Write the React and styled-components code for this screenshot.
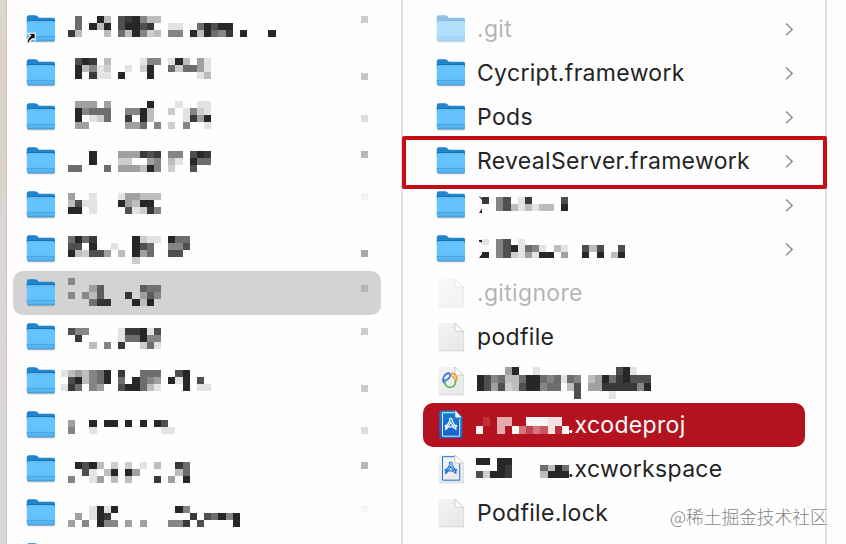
import React from "react";
import styled, { createGlobalStyle } from "styled-components";

const GlobalStyle = createGlobalStyle`
  * { box-sizing: border-box; }
  body {
    margin: 0;
    overflow: hidden;
    background: #fefefe;
    font-family: Inter, "Liberation Sans", sans-serif;
    color: #242424;
  }
`;

const Finder = styled.main`
  position: relative;
  display: flex;
  width: 846px;
  height: 544px;
  overflow: hidden;
`;

const WindowEdge = styled.div`
  flex: none;
  width: 7px;
  border-right: 1px solid #c9c3c1;
  background: linear-gradient(#dcd8c6, #d8d3c8 22%, #dcd6d5 45%, #ddd8d8);
`;

const Column = styled.section`
  flex: none;
  width: ${(p) => p.$width}px;
  padding: 7px ${(p) => p.$right}px 0 ${(p) => p.$left}px;
  border-right: 2px solid #dedede;
`;

const Row = styled.div`
  display: flex;
  height: 44px;
  padding-left: 13px;
  border-radius: 10px;
  background: ${(p) => p.$fill || "transparent"};
  color: ${(p) => p.$color || "#242424"};
`;

const IconBox = styled.span`
  position: relative;
  flex: none;
  width: 30px;
  height: 30px;
  margin-top: 7px;
  opacity: ${(p) => (p.$dim ? 0.5 : 1)};
  svg { display: block; }
`;

const AliasBadge = styled.span`
  position: absolute;
  left: 0;
  bottom: 0;
`;

const Name = styled.span`
  margin-left: ${(p) => p.$gap}px;
  font-size: 23px;
  line-height: 44px;
  letter-spacing: 0.32px;
  white-space: nowrap;
`;

const Redacted = styled.svg`
  flex: none;
  display: block;
  overflow: visible;
  margin-left: ${(p) => p.$gap}px;
  margin-top: ${(p) => p.$top}px;
`;

const Tail = styled.span`
  flex: none;
  width: 7px;
  height: 7px;
  margin-left: auto;
  margin-right: 13px;
  margin-top: ${(p) => p.$top}px;
  background: rgba(30, 30, 30, ${(p) => p.$alpha});
`;

const ChevronBox = styled.span`
  flex: none;
  margin-left: auto;
  margin-right: 11px;
  padding-top: 13.5px;
`;

const Highlight = styled.div`
  position: absolute;
  left: 402px;
  top: 136px;
  width: 425px;
  height: 53px;
  border: 4px solid #c50d14;
  border-radius: 2px;
`;

const Watermark = styled.div`
  position: absolute;
  left: 670px;
  top: 503px;
  font: 300 17.7px/26px "Noto Sans CJK SC", sans-serif;
  color: #858585;
  white-space: nowrap;
  text-shadow: 1px 1px 0 #fff;
`;

const SHADES = [0, 0.12, 0.22, 0.29, 0.42, 0.54, 0.65, 0.78, 0.88, 0.96];

/* Each digit is the strength of one block of a hidden name; a dot is an empty block. */
function Mosaic({ lines, gap, top, offset = 0, pitch = 7.16, cell = 7.1, color = "#1e1e1e", mark }) {
  const cols = Math.max(...lines.map((l) => l.length));
  return (
    <Redacted $gap={gap} $top={top} width={cols * pitch} height={lines.length * cell} shapeRendering="crispEdges">
      {lines.flatMap((line, y) =>
        [...line].map((c, x) =>
          c === "." ? null : (
            <rect
              key={`${x}-${y}`}
              x={(x + offset) * pitch}
              y={y * cell}
              width={pitch}
              height={cell}
              fill={color}
              fillOpacity={SHADES[+c]}
            />
          )
        )
      )}
      {mark && <path d={mark} fill="#222" shapeRendering="auto" />}
    </Redacted>
  );
}

function Folder() {
  return (
    <svg width="30" height="30" viewBox="0 0 30 30">
      <defs>
        <linearGradient id="folderFront" x1="0" y1="0" x2="0" y2="1">
          <stop offset="0" stopColor="#5dbcf7" />
          <stop offset="0.2" stopColor="#67c4fd" />
          <stop offset="1" stopColor="#62c0fb" />
        </linearGradient>
      </defs>
      <path d="M1 25.4Q1 28.2 3 28.2H27Q29.2 28.2 29.2 25.4Z" fill="#8ba5b8" opacity=".75" />
      <path d="M.8 3.2Q.8 1.2 2.8 1.2H9Q10.3 1.2 11.2 2.1L12.3 3.2Q13 3.8 14 3.8H27.2Q29 3.8 29 5.6V10H.8Z" fill="#2384cb" />
      <path d="M.8 6.2H29V8H.8Z" fill="#1670b5" />
      <path d="M.8 8.7Q.8 6.9 2.6 6.9H27.2Q29 6.9 29 8.7V25Q29 27 27 27H2.8Q.8 27 .8 25Z" fill="url(#folderFront)" />
      <path d="M.8 22.6H29V25Q29 27 27 27H2.8Q.8 27 .8 25Z" fill="#56b4f0" />
      <path d="M.8 22.4H29" stroke="#459fda" strokeWidth=".7" />
      <path d="M1.2 25.8Q1.8 26.8 3 26.8H27Q28.2 26.8 28.7 25.8" fill="none" stroke="#3e97d2" strokeWidth=".8" />
    </svg>
  );
}

function AliasArrow() {
  return (
    <AliasBadge>
      <svg width="10" height="12" viewBox="0 0 10 12">
        <path d="M1.8 1.2H9.2V8.2L7.1 6.4Q3.6 8 2.7 11.4L.8 10.4Q1.2 6.5 4.6 3.6Z" fill="#111" stroke="#fff" strokeWidth="1.1" />
      </svg>
    </AliasBadge>
  );
}

function Swirl() {
  return (
    <g fill="none" strokeWidth="1.6" strokeLinecap="round" strokeLinejoin="round">
      <path d="M8.6 17Q6.6 15.6 7.2 12.6Q8.3 7.6 13 7.1Q14.6 8.4 13.7 10.8Q12.2 14 8.6 14.4" stroke="#3a72dc" />
      <path d="M15.3 9.6Q14.9 7.4 16.6 7.2Q20.6 8.3 20.8 12.6Q20.8 14.6 19.3 15.4Q19.4 11.7 15.3 9.6" stroke="#ee9a35" />
      <path d="M8.8 15.4Q8.4 19.2 11.6 20.8Q14.5 22 17.4 20.4Q19.6 18.8 19.5 15.6" stroke="#56b955" />
      <path d="M8.7 15.6Q9 14.4 10 14" stroke="#45a3a0" />
    </g>
  );
}

function AppGlyph({ color }) {
  return (
    <g fill="none" stroke={color} strokeWidth="1.1" strokeLinecap="round" strokeLinejoin="round">
      <path d="M13.4 9Q14.9 7.4 16.2 9L16 10.4L19.6 16.8L20 19.4L18.2 18.2L14.8 12.2L11.2 18.3L9.6 19.6L9.9 17.4L14 10.4Z" />
      <path d="M10.6 15.2H9.6Q8.6 16.2 9.7 16.9H16.8M16.2 15.2H20Q21.3 16 20 16.9H19" />
    </g>
  );
}

function Doc({ kind }) {
  const blue = kind === "project";
  const workspace = kind === "workspace";
  return (
    <svg width="30" height="30" viewBox="0 0 30 30">
      <defs>
        <linearGradient id="paper" x1="0" y1="0" x2=".5" y2="1">
          <stop offset="0" stopColor="#f4f4f4" />
          <stop offset="1" stopColor="#e9e9e9" />
        </linearGradient>
        <linearGradient id="bluePaper" x1="0" y1="0" x2="0" y2="1">
          <stop offset="0" stopColor="#1482d0" />
          <stop offset="1" stopColor="#1561d0" />
        </linearGradient>
      </defs>
      {!blue && <path d="M3 2H19.5L28 10V29.2H3Z" fill="#bcbcbc" opacity=".65" />}
      <path
        d={blue ? "M5 .6H20L26.3 7V27Q26.3 28.2 25.2 28.2H4.6Q3.4 28.2 3.4 27V1.8Q3.4 .6 5 .6Z" : "M4 1H19.5L27.5 9V27.3Q27.5 28.5 26.3 28.5H3.8Q2.5 28.5 2.5 27.3V2.4Q2.5 1 4 1Z"}
        fill={blue ? "url(#bluePaper)" : "url(#paper)"}
      />
      {(blue || workspace) && (
        <>
          <path d="M18.7 2.7H6.5V26.2H23.7V9" fill="none" stroke={blue ? "#e2f1fd" : "#2474d8"} strokeWidth="1" />
          <AppGlyph color={blue ? "#fff" : "#1f70dc"} />
        </>
      )}
      {blue ? (
        <path d="M19.3 .6V6.2Q19.3 7.5 20.6 7.5H25.6Z" fill="#fff" />
      ) : (
        <path d="M19 1V7.8Q19 9.2 20.4 9.2H27.5Z" fill="#fdfdfd" stroke="#bdbdbd" strokeWidth=".7" />
      )}
      {kind === "swirl" && <Swirl />}
    </svg>
  );
}

function Chevron() {
  return (
    <ChevronBox>
      <svg width="10" height="15" viewBox="0 0 10 15">
        <path d="M2 1.6L8.2 7.4L2 13.2" fill="none" stroke="#8c8c8c" strokeWidth="1.4" />
      </svg>
    </ChevronBox>
  );
}

const leftRows = [
  { alias: true, top: 9, tail: [9, 0.22], lines: [".6..93.789533", ".6.939.79978..11..69799", "83...3.639523.55.939658.9...9"] },
  { top: 7, tail: [22, 0.25], lines: [".798.3....155.193.41", ".93512..1.29..626641", ".9.811.9...9......13"] },
  { top: 6, tail: [20, 0.14], lines: [".444.4.....9...1..11", ".95666..5593..2.1521", ".9.126..8.93....1849", ".44.....446.5.2.5..1"] },
  { top: 12, tail: [12, 0.32], lines: ["...9...444878.55.798", "...9...22..45.31.966", "66...6.444395.2..7.."] },
  { top: 10, tail: [10, 0.05], lines: ["4..1...144333", "3711...94399.", "99.1....71285"] },
  { top: 9, tail: [23, 0.38], lines: ["6968.....9211.966", "77.9..1..976..557", "932774.3.946..77.", ".........2......."] },
  { top: 7, tail: [14, 0.16], selected: true, lines: ["4............", "...36.....655", "4.416...8.364", "...588...919."] },
  { top: 13, tail: [13, 0.22], lines: ["755....188917", ".8.....166955", "...3.5.8..261"] },
  { top: 11, offset: -1, tail: [26, 0.23], lines: ["1343569.8..666..79", ".793569.6.9654.919.7", "186.54..799631...9.11"] },
  { top: 17, tail: [24, 0.14], lines: ["4..9.99.9.9.97.", "5..1.........11"] },
  { top: 15, tail: [15, 0.32], lines: [".9793.2.2.1.3..86", "..71.39.94.....36", "5..14.3.3...8.4.9"] },
  { top: 15, tail: [14, 0.04], lines: ["...1919........95.......", ".4.198...........8.76959", "4.5.955.4.4...558.7....9"] },
];

const rightRows = [
  { name: ".git", dim: true, chevron: true },
  { name: "Cycript.framework", chevron: true },
  { name: "Pods", chevron: true },
  { name: "RevealServer.framework", chevron: true },
  {
    chevron: true,
    mosaic: { gap: 15.5, top: 14, lines: ["8.57.18....7", "..57313133.9"], mark: "M-3 -1L0 1.2V3L-2.4 .6ZM0 11.5V16H-3Z" },
  },
  {
    chevron: true,
    mosaic: {
      gap: 15.5,
      top: 12,
      cell: 6.4,
      lines: ["1.57.1..............", "..5791651.31..737..7", "9.57214199.4..9.9.39"],
      mark: "M-3 1H0V3.4L-3 2.6ZM0 15V19H-3Z",
    },
  },
  { name: ".gitignore", icon: "plain", dim: true },
  { name: "podfile", icon: "plain" },
  {
    icon: "swirl",
    mosaic: {
      gap: 11,
      top: 8,
      pitch: 6.96,
      cell: 8,
      lines: ["....49..1...........791", "975633699656165.349689777", "974723799566.37.448888859", "..............7....1"],
    },
  },
  {
    name: ".xcodeproj",
    icon: "project",
    selected: true,
    mosaic: { gap: 10, top: 14, cell: 8.5, color: "#fff", lines: [".1.66..99988.", "9..6.94243819"] },
  },
  {
    name: ".xcworkspace",
    icon: "workspace",
    mosaic: { gap: 10, top: 11, cell: 6.7, lines: ["99.99........", "...98....6396", "72998....3999"] },
  },
  { name: "Podfile.lock", icon: "plain" },
];

export default function App() {
  return (
    <>
      <GlobalStyle />
      <Finder>
        <WindowEdge />
        <Column $width={396} $left={6} $right={20}>
          {leftRows.map((r, i) => (
            <Row key={i} $fill={r.selected && "#d3d3d3"}>
              <IconBox>
                <Folder />
                {r.alias && <AliasArrow />}
              </IconBox>
              <Mosaic lines={r.lines} top={r.top} gap={12} offset={r.offset} />
              <Tail $top={r.tail[0]} $alpha={r.tail[1]} />
            </Row>
          ))}
          <Row>
            <IconBox>
              <Folder />
            </IconBox>
          </Row>
        </Column>
        <Column $width={424} $left={20} $right={20}>
          {rightRows.map((r, i) => (
            <Row key={i} $fill={r.selected && "#b5121f"} $color={r.selected ? "#fff" : r.dim ? "#b5b5b5" : undefined}>
              <IconBox $dim={r.dim}>{r.icon ? <Doc kind={r.icon} /> : <Folder />}</IconBox>
              {r.mosaic && <Mosaic {...r.mosaic} />}
              {r.name && <Name $gap={r.mosaic ? -1.5 : 11}>{r.name}</Name>}
              {r.chevron && <Chevron />}
            </Row>
          ))}
        </Column>
        <Highlight />
        <Watermark>@稀土掘金技术社区</Watermark>
      </Finder>
    </>
  );
}
